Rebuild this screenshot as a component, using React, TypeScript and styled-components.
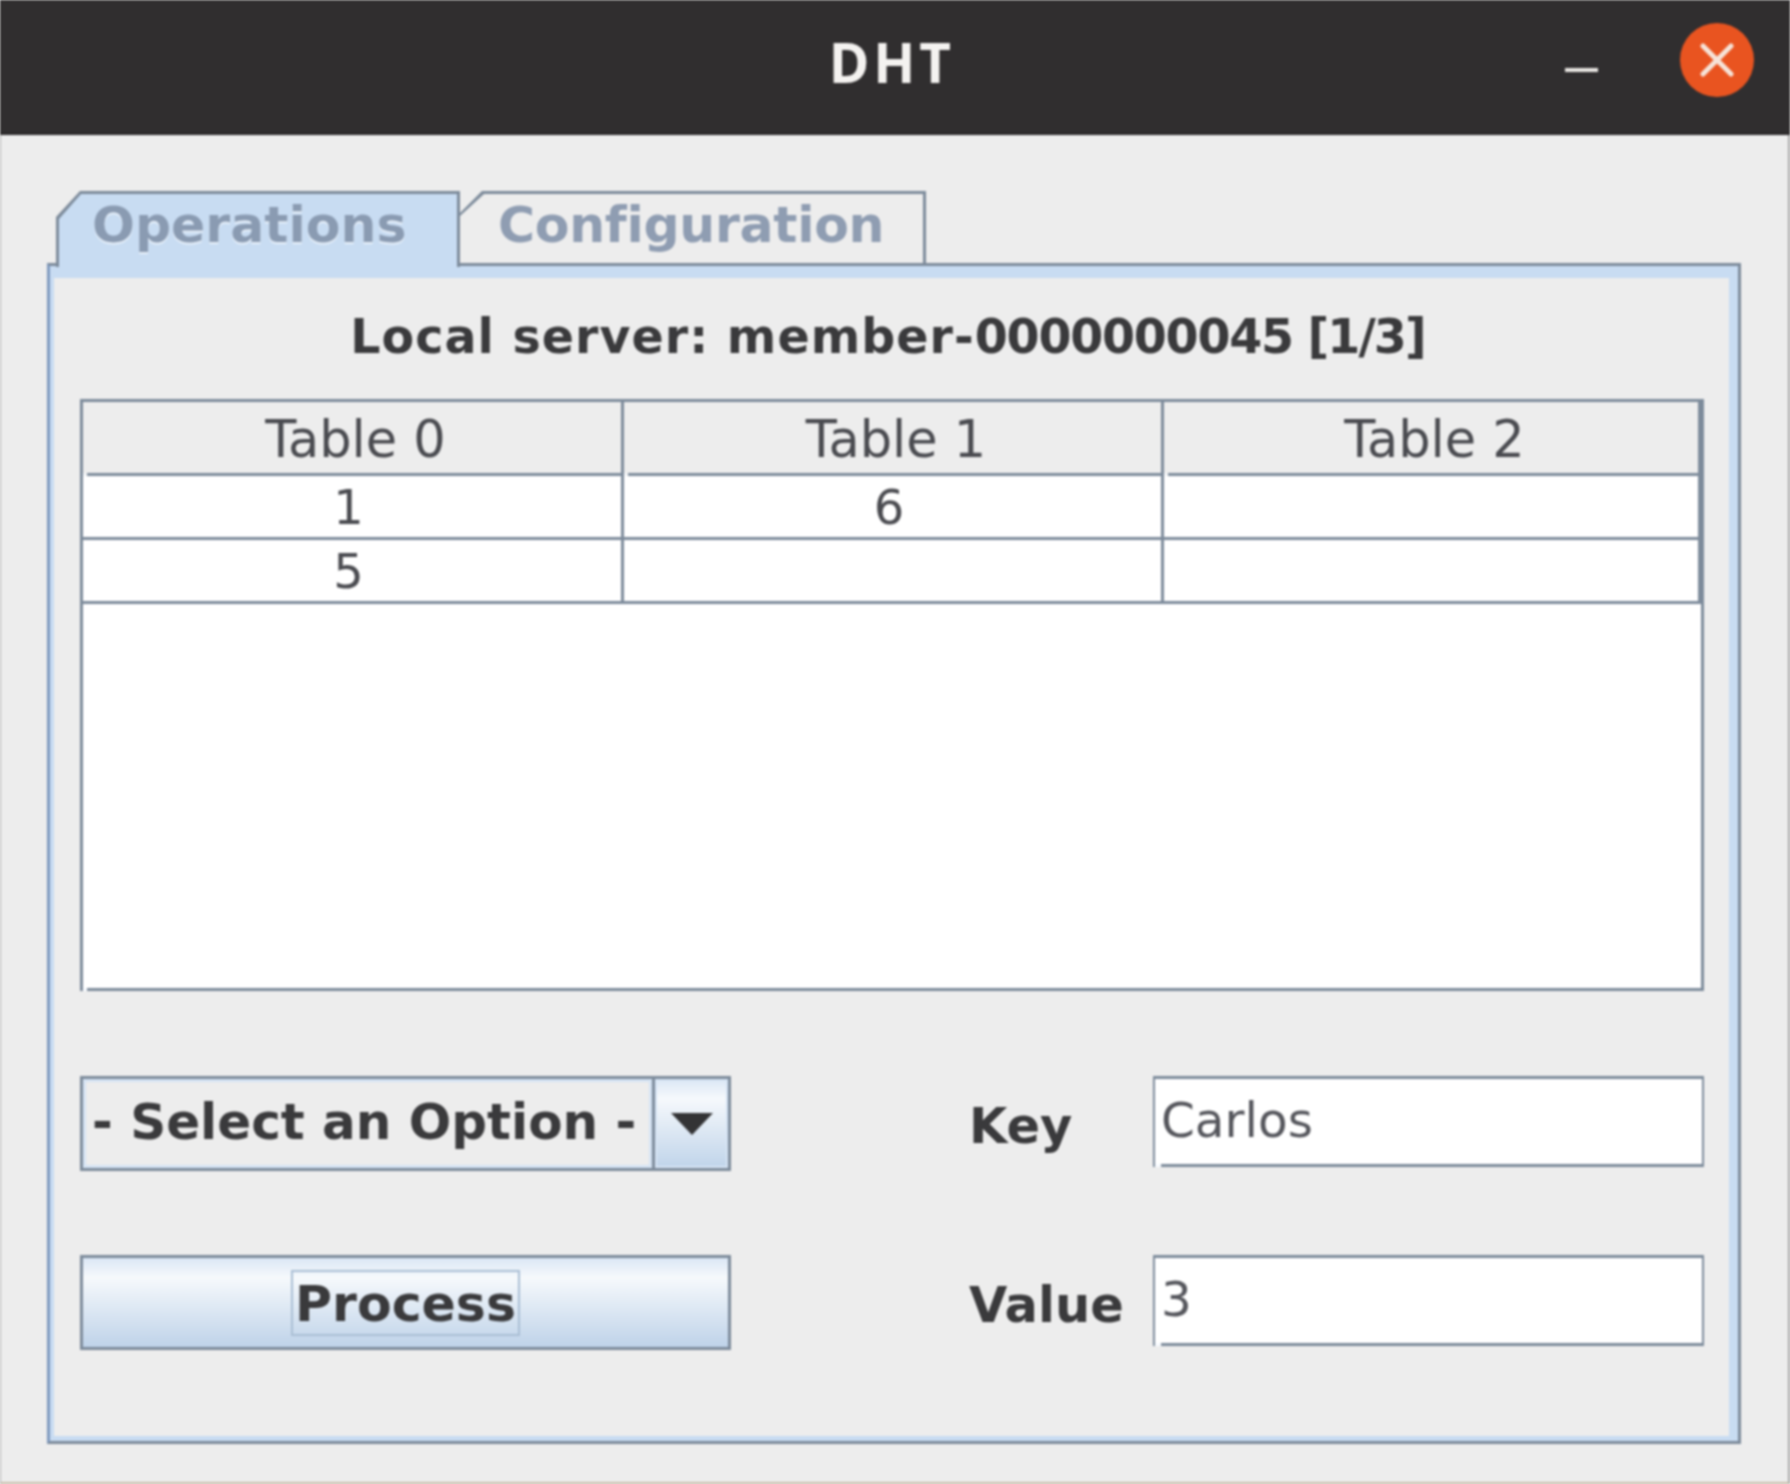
import React from "react";
import styled, { createGlobalStyle } from "styled-components";

const Global = createGlobalStyle`
  html, body { margin: 0; padding: 0; background: #ededed; }
  #root { width: 1790px; height: 1484px; overflow: hidden; }
`;

const LINE = "#7d8b9b";
const BLUE = "#c8dcf2";
const FACE = "#ededed";

const Window = styled.div`
  width: 1790px;
  height: 1484px;
  box-sizing: border-box;
  display: flex;
  flex-direction: column;
  background: ${FACE};
  border-right: 2px solid #a9a9a9;
  border-left: 1px solid #b5b5b5;
  border-bottom: 2px solid #c9bda9;
  font-family: "DejaVu Sans", sans-serif;
  color: #3a3a3c;
  filter: blur(0.85px);
`;

const TitleBar = styled.header`
  flex: none;
  height: 135px;
  margin: 0 -2px 0 -1px;
  display: grid;
  grid-template-columns: 1fr auto 1fr;
  align-items: center;
  background: #302e2f;
  border-bottom: 2px solid #2a2829;
  box-sizing: border-box;
`;

const WindowTitle = styled.h1`
  grid-column: 2;
  margin: 0 6px 10px 0;
  font: 700 55px/1 "Noto Sans", sans-serif;
  letter-spacing: 4px;
  color: #f4f2f0;
`;

const WindowControls = styled.div`
  grid-column: 3;
  justify-self: end;
  display: flex;
  align-items: center;
  gap: 80px;
  padding: 0 36px 13px 0;
`;

const MinimizeGlyph = styled.span`
  display: block;
  width: 33px;
  height: 4px;
  margin-top: 20px;
  margin-right: 2px;
  background: #e9e6e3;
`;

const CloseButton = styled.span`
  width: 74px;
  height: 74px;
  border-radius: 50%;
  background: #e95420;
  display: flex;
  align-items: center;
  justify-content: center;
`;

const Body = styled.main`
  flex: 1;
  padding: 56px 47px 0 46px;
`;

const TabStrip = styled.div`
  display: flex;
  height: 74px;
  padding-left: 9px;
  margin-bottom: -2px;
  position: relative;
  z-index: 1;
`;

const Tab = styled.div<{ $active?: boolean }>`
  box-sizing: border-box;
  height: ${(p) => (p.$active ? "76px" : "72px")};
  width: ${(p) => (p.$active ? "404px" : "466px")};
  padding: ${(p) => (p.$active ? "3px 0 0 3px" : "3px 3px 0 0")};
  background: ${LINE};
  clip-path: ${(p) =>
    p.$active
      ? "polygon(24px 0, 100% 0, 100% 100%, 0 100%, 0 26px)"
      : "polygon(22px 0, 100% 0, 100% 100%, 0 100%, 0 22px)"};
`;

const TabFace = styled.div<{ $active?: boolean }>`
  height: 100%;
  box-sizing: border-box;
  padding-left: ${(p) => (p.$active ? "33px" : "38px")};
  padding-top: 3px;
  background: ${(p) => (p.$active ? BLUE : FACE)};
  border-right: ${(p) => (p.$active ? `3px solid ${LINE}` : "none")};
  background-clip: padding-box;
  clip-path: ${(p) =>
    p.$active
      ? "polygon(22px 0, 100% 0, 100% 100%, 0 100%, 0 25px)"
      : "polygon(24px 0, 100% 0, 100% 100%, 0 100%, 0 22px)"};
  font-size: 50.5px;
  letter-spacing: ${(p) => (p.$active ? "0" : "-0.3px")};
  line-height: 56px;
  font-weight: 700;
  color: ${(p) => (p.$active ? "#8a9bb2" : "#8f9db2")};
  text-shadow: ${(p) => (p.$active ? "0 2px 1px #e9f1fa" : "none")};
`;

const Panel = styled.section`
  box-sizing: border-box;
  height: 1181px;
  border: 3px solid ${LINE};
  border-left-color: #7f9abf;
`;

const PanelInner = styled.div`
  box-sizing: border-box;
  height: 100%;
  border-style: solid;
  border-color: ${BLUE};
  border-width: 12px 9px 5px 4px;
  padding: 0 25px 0 26px;
`;

const Heading = styled.h2`
  margin: 0;
  height: 121px;
  padding: 35px 9px 0 0;
  box-sizing: border-box;
  text-align: center;
  font-size: 47.5px;
  line-height: 48px;
  font-weight: 700;
  color: #3a3a3c;
`;

const HeadingPart = styled.span<{ $spacing: string }>`
  letter-spacing: ${(p) => p.$spacing};
`;

const TableFrame = styled.div`
  position: relative;
  box-sizing: border-box;
  height: 592px;
  background: #ffffff;
  border: 3px solid ${LINE};
  &::after {
    content: "";
    position: absolute;
    left: 0;
    bottom: -3px;
    width: 4px;
    height: 3px;
    background: #f8fbff;
  }
`;

const Row = styled.div`
  display: grid;
  grid-template-columns: 541px 540px 1fr;
`;

const HeaderCell = styled.div`
  position: relative;
  height: 74px;
  box-sizing: border-box;
  background: ${FACE};
  border-right: 3px solid ${LINE};
  border-bottom: 3px solid ${LINE};
  text-align: center;
  font-size: 51px;
  line-height: 76px;
  color: #4a4b50;
  padding-left: 7px;
  &::after {
    content: "";
    position: absolute;
    left: 0;
    bottom: -3px;
    width: 4px;
    height: 3px;
    background: #f4f6f8;
  }
`;

const Cell = styled.div`
  height: 64px;
  box-sizing: border-box;
  background: #ffffff;
  border-right: 3px solid ${LINE};
  border-bottom: 3px solid ${LINE};
  text-align: center;
  font-size: 48px;
  line-height: 62px;
  color: #4a4b50;
  padding-right: 7px;
`;

const Form = styled.div`
  display: grid;
  grid-template-columns: 651px 238px 184px 1fr;
  grid-template-rows: 95px 95px;
  row-gap: 84px;
  margin-top: 85px;
`;

const Select = styled.div`
  box-sizing: border-box;
  display: flex;
  border: 3px solid ${LINE};
  background: ${FACE};
`;

const SelectValue = styled.div`
  flex: 1;
  box-sizing: border-box;
  padding-left: 6px;
  border: 3px solid #d6e4f4;
  font-size: 50px;
  line-height: 80px;
  font-weight: 700;
  white-space: nowrap;
  color: #3a3a3c;
`;

const SelectArrow = styled.div`
  flex: none;
  width: 76px;
  box-sizing: border-box;
  border-left: 3px solid ${LINE};
  display: flex;
  align-items: center;
  justify-content: center;
  background: linear-gradient(#dbe7f5 0%, #f6f9fc 22%, #c0d4ea 100%);
  box-shadow: inset 0 0 0 2px #d6e4f4;
`;

const ProcessButton = styled.div`
  box-sizing: border-box;
  border: 3px solid ${LINE};
  display: flex;
  align-items: center;
  justify-content: center;
  background: linear-gradient(#dbe7f5 0%, #f6f9fc 22%, #bfd3e9 100%);
`;

const FocusRing = styled.span`
  box-sizing: border-box;
  width: 229px;
  height: 66px;
  border: 2px solid #a9bed4;
  font-size: 50.5px;
  line-height: 64px;
  font-weight: 700;
  text-align: center;
  color: #3a3a3c;
`;

const FieldLabel = styled.label`
  align-self: center;
  font-size: 49.5px;
  line-height: 56px;
  font-weight: 700;
  color: #3a3a3c;
  padding-top: 5px;
`;

const FieldWrap = styled.div`
  position: relative;
  height: 91px;
  &::after {
    content: "";
    position: absolute;
    left: 2px;
    bottom: 0;
    width: 6px;
    height: 3px;
    background: #f8fbff;
  }
`;

const Field = styled.input`
  display: block;
  box-sizing: border-box;
  width: 100%;
  height: 100%;
  margin: 0;
  padding: 0 0 3px 6px;
  background: #ffffff;
  border-style: solid;
  border-color: ${LINE};
  border-width: 3px 2px 3px 2px;
  border-radius: 0;
  outline: none;
  font-family: "DejaVu Sans", sans-serif;
  font-size: 48.5px;
  color: #55565c;
`;

const headers = ["Table 0", "Table 1", "Table 2"];
const rows = [
  ["1", "6", ""],
  ["5", "", ""],
];

export default function App() {
  return (
    <>
      <Global />
      <Window>
        <TitleBar>
          <WindowTitle>DHT</WindowTitle>
          <WindowControls>
            <MinimizeGlyph />
            <CloseButton>
              <svg width="34" height="34" viewBox="0 0 34 34" aria-hidden="true">
                <path d="M3 3 L31 31 M31 3 L3 31" stroke="#f6e3d8" strokeWidth="5" strokeLinecap="round" />
              </svg>
            </CloseButton>
          </WindowControls>
        </TitleBar>
        <Body>
          <TabStrip>
            <Tab $active>
              <TabFace $active>Operations</TabFace>
            </Tab>
            <Tab>
              <TabFace>Configuration</TabFace>
            </Tab>
          </TabStrip>
          <Panel>
            <PanelInner>
              <Heading>
                <HeadingPart $spacing="1.05px">Local server: member-</HeadingPart>
                <HeadingPart $spacing="-1.25px">0000000045</HeadingPart>
                <HeadingPart $spacing="-1.9px"> [1/3]</HeadingPart>
              </Heading>
              <TableFrame>
                <Row>
                  {headers.map((h) => (
                    <HeaderCell key={h}>{h}</HeaderCell>
                  ))}
                </Row>
                {rows.map((r, i) => (
                  <Row key={i}>
                    {r.map((c, j) => (
                      <Cell key={j}>{c}</Cell>
                    ))}
                  </Row>
                ))}
              </TableFrame>
              <Form>
                <Select>
                  <SelectValue>- Select an Option -</SelectValue>
                  <SelectArrow>
                    <svg width="42" height="22" viewBox="0 0 42 22" aria-hidden="true">
                      <path d="M0 0 H42 L21 22 Z" fill="#333335" />
                    </svg>
                  </SelectArrow>
                </Select>
                <span />
                <FieldLabel>Key</FieldLabel>
                <FieldWrap>
                  <Field readOnly value="Carlos" />
                </FieldWrap>
                <ProcessButton>
                  <FocusRing>Process</FocusRing>
                </ProcessButton>
                <span />
                <FieldLabel>Value</FieldLabel>
                <FieldWrap>
                  <Field readOnly value="3" />
                </FieldWrap>
              </Form>
            </PanelInner>
          </Panel>
        </Body>
      </Window>
    </>
  );
}
